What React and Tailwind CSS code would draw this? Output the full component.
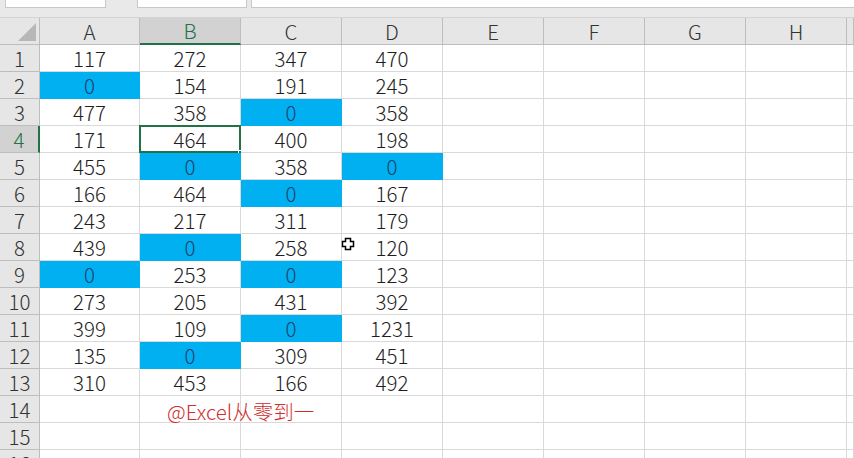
import React from "react";

const cols = ["A", "B", "C", "D", "E", "F", "G", "H", "I"];
const widths = ["w-[100px]", "w-[101px]", "w-[101px]", "w-[101px]", "w-[101px]", "w-[101px]", "w-[101px]", "w-[101px]", "flex-1"];

const data = [
  ["117", "272", "347", "470"],
  ["0*", "154", "191", "245"],
  ["477", "358", "0*", "358"],
  ["171", "464", "400", "198"],
  ["455", "0*", "358", "0*"],
  ["166", "464", "0*", "167"],
  ["243", "217", "311", "179"],
  ["439", "0*", "258", "120"],
  ["0*", "253", "0*", "123"],
  ["273", "205", "431", "392"],
  ["399", "109", "0*", "1231"],
  ["135", "0*", "309", "451"],
  ["310", "453", "166", "492"],
  [],
  [],
  [],
];

const font = { fontFamily: '"Noto Sans CJK SC", "Noto Sans", sans-serif' };

function Cell({ ci, ri, v }) {
  const blue = v && v.endsWith("*");
  const text = v ? v.replace("*", "") : "";
  const selected = ri === 3 && ci === 1;
  const mark = ri === 13 && ci === 1;
  return (
    <div
      className={`${widths[ci]} h-[27px] shrink-0 relative flex items-center justify-center border-r border-b ${
        blue ? "bg-[#00b0f0] border-[#00b0f0]" : "bg-white border-[#d9d9d9]"
      } ${blue ? "text-[#1f3f6e]" : "text-[#1e1e1e]"} ${mark ? "z-10" : ""}`}
    >
      {mark ? (
        <span className="absolute left-[27px] top-[5px] text-[20.5px] font-light leading-none text-[#d22b2b] whitespace-nowrap">
          @Excel从零到一
        </span>
      ) : (
        <span className="text-[20.5px] font-light leading-none">{text}</span>
      )}
      {selected && (
        <>
          <div className="absolute left-[-1px] top-[-1px] right-[-1px] bottom-[-1px] border-2 border-[#217346]" />
          <div className="absolute right-[-3px] bottom-[-3px] w-[5px] h-[5px] bg-[#217346] border border-white" />
        </>
      )}
    </div>
  );
}

export default function App() {
  return (
    <div className="w-[854px] h-[458px] overflow-hidden bg-[#e6e6e6] relative select-none" style={font}>
      {/* top strip */}
      <div className="h-[17px] flex items-start gap-0 bg-[#e9e9e9]">
        <div className="ml-[5px] w-[101px] h-[8px] bg-white border border-t-0 border-[#c8c8c8]" />
        <div className="ml-[31px] w-[110px] h-[8px] bg-white border border-t-0 border-[#c8c8c8]" />
        <div className="ml-[4px] flex-1 h-[8px] bg-white border border-t-0 border-r-0 border-[#c8c8c8]" />
      </div>
      {/* header row */}
      <div className="flex h-[28px] border-t border-[#d4d4d4]">
        <div className="w-[40px] shrink-0 relative border-r border-b border-[#bdbdbd] bg-[#e6e6e6]">
          <svg className="absolute right-[3px] bottom-[3px]" width="18" height="18" viewBox="0 0 18 18">
            <polygon points="18,0 18,18 0,18" fill="#b7b7b7" />
          </svg>
        </div>
        {cols.map((c, i) => (
          <div
            key={c}
            className={`${widths[i]} shrink-0 flex items-center justify-center border-r ${
              i === 1
                ? "bg-[#d2d2d2] border-b-2 border-b-[#217346] text-[#217346] border-r-[#bdbdbd]"
                : "bg-[#e6e6e6] border-b border-[#bdbdbd] text-[#333]"
            }`}
          >
            <span className="text-[20.5px] font-light leading-none">{i === 8 ? "" : c}</span>
          </div>
        ))}
      </div>
      {/* rows */}
      {data.map((row, ri) => (
        <div key={ri} className="flex">
          <div
            className={`w-[40px] h-[27px] shrink-0 flex items-center justify-center border-b border-[#bdbdbd] ${
              ri === 3
                ? "bg-[#d2d2d2] text-[#217346] border-r-2 border-r-[#217346]"
                : "bg-[#e6e6e6] text-[#333] border-r border-r-[#bdbdbd]"
            }`}
          >
            <span className="text-[20.5px] font-light leading-none">{ri + 1}</span>
          </div>
          {cols.map((c, ci) => (
            <Cell key={c} ci={ci} ri={ri} v={row[ci]} />
          ))}
        </div>
      ))}
      {/* cursor */}
      <svg className="absolute left-[341px] top-[237px]" width="14" height="14" viewBox="0 0 14 14">
        <path d="M4.5 1.5h5v3h3v5h-3v3h-5v-3h-3v-5h3z" fill="#fff" stroke="#000" strokeWidth="1.5" />
      </svg>
    </div>
  );
}
